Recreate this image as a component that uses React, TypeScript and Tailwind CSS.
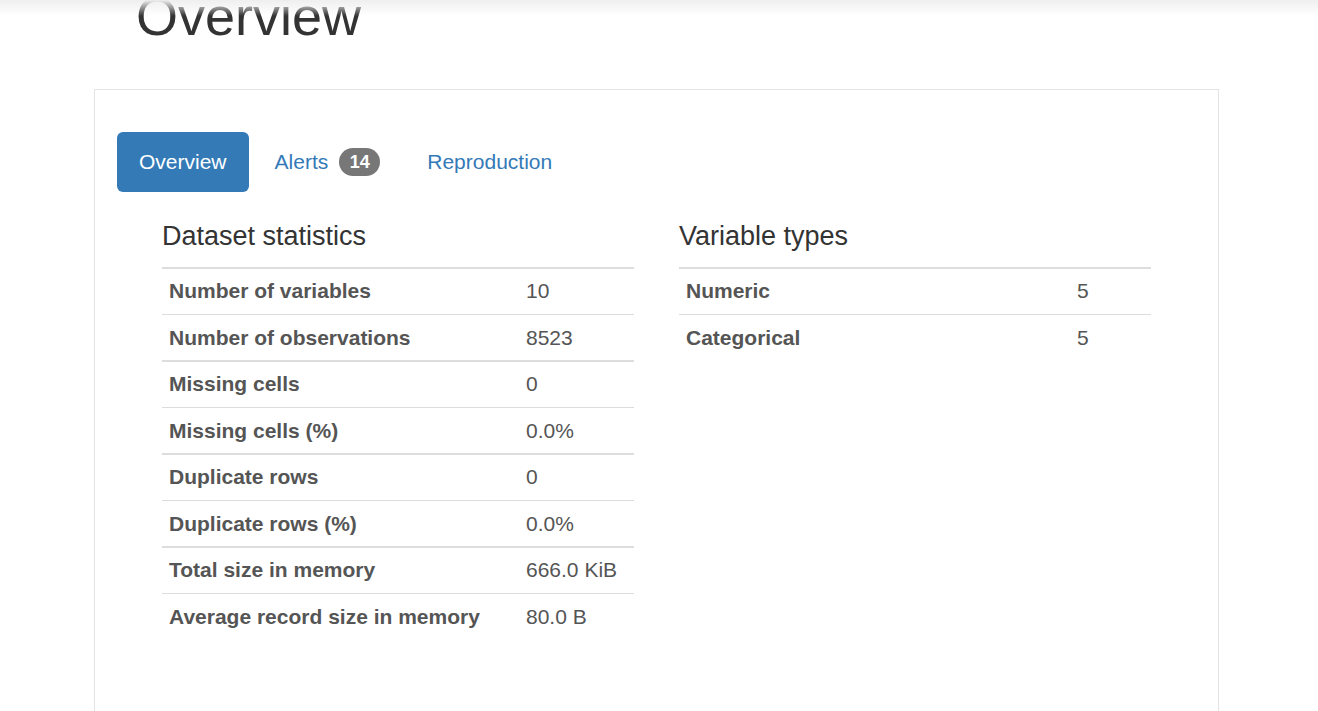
import React from "react";

const datasetStats = [
  { label: "Number of variables", value: "10" },
  { label: "Number of observations", value: "8523" },
  { label: "Missing cells", value: "0" },
  { label: "Missing cells (%)", value: "0.0%" },
  { label: "Duplicate rows", value: "0" },
  { label: "Duplicate rows (%)", value: "0.0%" },
  { label: "Total size in memory", value: "666.0 KiB" },
  { label: "Average record size in memory", value: "80.0 B" },
];

const variableTypes = [
  { label: "Numeric", value: "5" },
  { label: "Categorical", value: "5" },
];

type Row = { label: string; value: string };

const StatTable = ({ title, rows, labelWidth }: { title: string; rows: Row[]; labelWidth: string }) => (
  <div className="flex flex-col">
    <h4 className="h-[30px] mt-[29px] mb-[16px] text-[27px] leading-[30px] text-[#333]">{title}</h4>
    <div className="flex flex-col">
      {rows.map((row, i) => (
        <div
          key={row.label}
          className={
            "flex items-center box-border border-[#ddd] " +
            (i % 2 === 0 ? "border-t-2 h-[47px] pb-[2px]" : "border-t h-[46px]")
          }
        >
          <div className={labelWidth + " pl-[7px] font-bold text-[21px] text-[#555] shrink-0"}>{row.label}</div>
          <div className="flex-1 pl-[8px] text-[21px] text-[#555]">{row.value}</div>
        </div>
      ))}
    </div>
  </div>
);

const App = () => {
  return (
    <div className="relative min-h-[711px] bg-white overflow-hidden font-['Liberation_Sans',Arial,sans-serif]">
      {/* navbar shadow */}
      <div className="absolute top-0 left-0 right-0 h-[16px] bg-gradient-to-b from-[#efefef] to-transparent z-10"></div>

      <h1 className="mt-[-13px] pl-[136px] text-[54px] leading-[59px] text-[#333]">Overview</h1>

      <div className="ml-[94px] w-[1125px] mt-[43px] border border-[#e3e3e3] pb-[120px]">
        {/* Tabs */}
        <div className="flex items-center pl-[22px] pt-[42px]">
          <div className="h-[60px] px-[22px] flex items-center rounded-[6px] bg-[#337ab7] text-white text-[21px]">
            Overview
          </div>
          <div className="h-[60px] pl-[26px] pr-[23px] flex items-center text-[#337ab7] text-[21px]">
            Alerts
            <span className="ml-[11px] h-[28px] px-[10.5px] flex items-center rounded-[15px] bg-[#777] text-white text-[18px] font-bold">
              14
            </span>
          </div>
          <div className="h-[60px] px-[24px] flex items-center text-[#337ab7] text-[21px]">Reproduction</div>
        </div>

        {/* Content */}
        <div className="grid grid-cols-2 gap-[45px] px-[67px]">
          <StatTable title="Dataset statistics" rows={datasetStats} labelWidth="w-[356px]" />
          <StatTable title="Variable types" rows={variableTypes} labelWidth="w-[390px]" />
        </div>
      </div>
    </div>
  );
};

export default App;
